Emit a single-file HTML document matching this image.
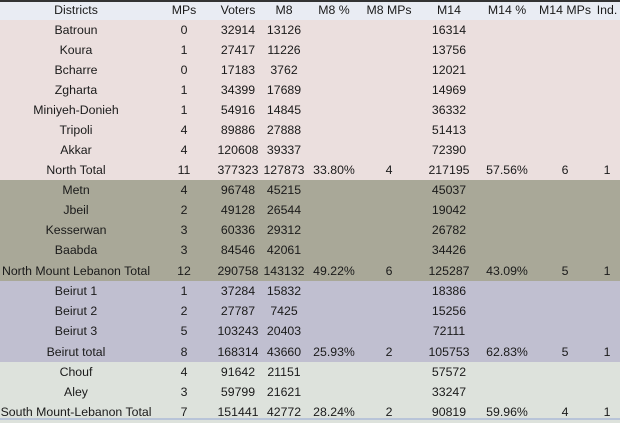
<!DOCTYPE html>
<html><head><meta charset="utf-8"><style>
*{margin:0;padding:0;box-sizing:border-box}
body{width:620px;height:420px;overflow:hidden;background:#fff;font-family:"Liberation Sans",sans-serif;font-size:12.3px;color:#1a1a1a;position:relative}
.r{position:absolute;left:0;width:620px;height:21px}
.r span{position:absolute;top:0;line-height:20px;text-align:center;white-space:nowrap}
.a{left:0;width:152px}
.b{left:164px;width:40px}
.c{left:208px;width:60px}
.d{left:254px;width:60px}
.e{left:304px;width:60px}
.f{left:359px;width:60px}
.g{left:419px;width:60px}
.h{left:477px;width:60px}
.i{left:530px;width:70px}
.j{left:592px;width:30px}
.hd{background:#e9ecf3}
.n{background:#ebdfde}
.m{background:#a9a898}
.bt{background:#c0bfd0}
.s{background:#dde2dc}
</style></head><body>
<div class="r hd" style="top:0"><span class="a">Districts</span><span class="b">MPs</span><span class="c">Voters</span><span class="d">M8</span><span class="e">M8 %</span><span class="f">M8 MPs</span><span class="g">M14</span><span class="h">M14 %</span><span class="i">M14 MPs</span><span class="j">Ind.</span></div>
<div class="r n" style="top:20px"><span class="a">Batroun</span><span class="b">0</span><span class="c">32914</span><span class="d">13126</span><span class="g">16314</span></div>
<div class="r n" style="top:40px"><span class="a">Koura</span><span class="b">1</span><span class="c">27417</span><span class="d">11226</span><span class="g">13756</span></div>
<div class="r n" style="top:60px"><span class="a">Bcharre</span><span class="b">0</span><span class="c">17183</span><span class="d">3762</span><span class="g">12021</span></div>
<div class="r n" style="top:80px"><span class="a">Zgharta</span><span class="b">1</span><span class="c">34399</span><span class="d">17689</span><span class="g">14969</span></div>
<div class="r n" style="top:100px"><span class="a">Miniyeh-Donieh</span><span class="b">1</span><span class="c">54916</span><span class="d">14845</span><span class="g">36332</span></div>
<div class="r n" style="top:120px"><span class="a">Tripoli</span><span class="b">4</span><span class="c">89886</span><span class="d">27888</span><span class="g">51413</span></div>
<div class="r n" style="top:140px"><span class="a">Akkar</span><span class="b">4</span><span class="c">120608</span><span class="d">39337</span><span class="g">72390</span></div>
<div class="r n" style="top:160px"><span class="a">North Total</span><span class="b">11</span><span class="c">377323</span><span class="d">127873</span><span class="e">33.80%</span><span class="f">4</span><span class="g">217195</span><span class="h">57.56%</span><span class="i">6</span><span class="j">1</span></div>
<div class="r m" style="top:180px"><span class="a">Metn</span><span class="b">4</span><span class="c">96748</span><span class="d">45215</span><span class="g">45037</span></div>
<div class="r m" style="top:200px"><span class="a">Jbeil</span><span class="b">2</span><span class="c">49128</span><span class="d">26544</span><span class="g">19042</span></div>
<div class="r m" style="top:220px"><span class="a">Kesserwan</span><span class="b">3</span><span class="c">60336</span><span class="d">29312</span><span class="g">26782</span></div>
<div class="r m" style="top:240px"><span class="a">Baabda</span><span class="b">3</span><span class="c">84546</span><span class="d">42061</span><span class="g">34426</span></div>
<div class="r m" style="top:261px"><span class="a">North Mount Lebanon Total</span><span class="b">12</span><span class="c">290758</span><span class="d">143132</span><span class="e">49.22%</span><span class="f">6</span><span class="g">125287</span><span class="h">43.09%</span><span class="i">5</span><span class="j">1</span></div>
<div class="r bt" style="top:281px"><span class="a">Beirut 1</span><span class="b">1</span><span class="c">37284</span><span class="d">15832</span><span class="g">18386</span></div>
<div class="r bt" style="top:301px"><span class="a">Beirut 2</span><span class="b">2</span><span class="c">27787</span><span class="d">7425</span><span class="g">15256</span></div>
<div class="r bt" style="top:321px"><span class="a">Beirut 3</span><span class="b">5</span><span class="c">103243</span><span class="d">20403</span><span class="g">72111</span></div>
<div class="r bt" style="top:342px;height:20px"><span class="a">Beirut total</span><span class="b">8</span><span class="c">168314</span><span class="d">43660</span><span class="e">25.93%</span><span class="f">2</span><span class="g">105753</span><span class="h">62.83%</span><span class="i">5</span><span class="j">1</span></div>
<div class="r s" style="top:362px"><span class="a">Chouf</span><span class="b">4</span><span class="c">91642</span><span class="d">21151</span><span class="g">57572</span></div>
<div class="r s" style="top:382px"><span class="a">Aley</span><span class="b">3</span><span class="c">59799</span><span class="d">21621</span><span class="g">33247</span></div>
<div class="r s" style="top:402px"><span class="a">South Mount-Lebanon Total</span><span class="b">7</span><span class="c">151441</span><span class="d">42772</span><span class="e">28.24%</span><span class="f">2</span><span class="g">90819</span><span class="h">59.96%</span><span class="i">4</span><span class="j">1</span></div>
<div style="position:absolute;top:0;left:0;width:620px;height:2px;background:#333"></div>
<div style="position:absolute;top:418px;left:0;width:620px;height:2px;background:#b8c4d8"></div>
</body></html>
